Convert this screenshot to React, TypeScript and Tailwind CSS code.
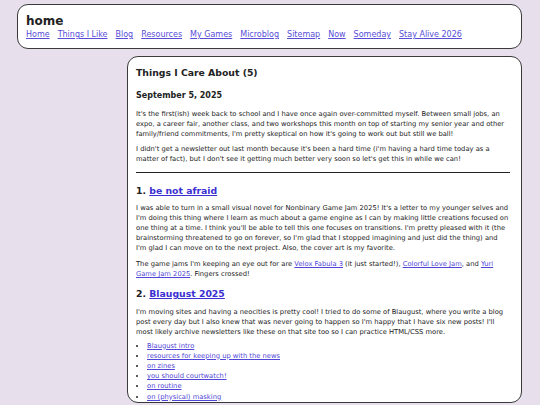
import React from 'react'

const nav = ['Home', 'Things I Like', 'Blog', 'Resources', 'My Games', 'Microblog', 'Sitemap', 'Now', 'Someday', 'Stay Alive 2026']

const posts = [
  'Blaugust intro',
  'resources for keeping up with the news',
  'on zines',
  'you should courtwatch!',
  'on routine',
  'on (physical) masking',
]

function A({ children }: { children: React.ReactNode }) {
  return (
    <a href="#" className="text-[#4f46d8] underline">
      {children}
    </a>
  )
}

export default function App() {
  return (
    <div
      className="h-[405px] overflow-hidden bg-[#e7e0ec] pt-[4px] text-[#222]"
      style={{ fontFamily: '"DejaVu Sans", Verdana, sans-serif' }}
    >
      {/* header */}
      <header className="ml-[17px] mr-[18px] rounded-[11px] border-[1.5px] border-[#3a3a3a] bg-white px-[8px] pb-[7px] pt-[8px]">
        <h1 className="text-[12px] font-bold leading-[16px]">home</h1>
        <nav className="flex gap-[8px] text-[8px] leading-[12px]">
          {nav.map((n) => (
            <a key={n} href="#" className="text-[#574ed8] underline">
              {n}
            </a>
          ))}
        </nav>
      </header>

      <div className="mt-[7px] flex">
        <div className="w-[127px] shrink-0" />
        <main className="mr-[18px] flex-1 rounded-[11px] border-[1.5px] border-[#3a3a3a] bg-white pl-[8px] pr-[11px] pt-[8px]">
          <h2 className="text-[9.3px] font-bold leading-[16px]">Things I Care About (5)</h2>
          <h3 className="mt-[8px] text-[8px] font-bold leading-[14px]">September 5, 2025</h3>
          <div className="text-[6.75px] leading-[10px]">
            <p className="mt-[5.5px]">
              It's the first(ish) week back to school and I have once again over-committed myself. Between small jobs, an
              expo, a career fair, another class, and two workshops this month on top of starting my senior year and other
              family/friend commitments, I'm pretty skeptical on how it's going to work out but still we ball!
            </p>
            <p className="mt-[5px]">
              I didn't get a newsletter out last month because it's been a hard time (i'm having a hard time today as a
              matter of fact), but I don't see it getting much better very soon so let's get this in while we can!
            </p>
          </div>
          <hr className="mt-[8px] border-t-[1.5px] border-[#222]" />

          <h2 className="mt-[10.5px] text-[9.3px] font-bold leading-[16px]">
            1.{' '}
            <a href="#" className="text-[#3b30d2] underline">
              be not afraid
            </a>
          </h2>
          <div className="text-[6.75px] leading-[10px]">
            <p className="mt-[4px]">
              I was able to turn in a small visual novel for Nonbinary Game Jam 2025! It's a letter to my younger selves and
              I'm doing this thing where I learn as much about a game engine as I can by making little creations focused on
              one thing at a time. I think you'll be able to tell this one focuses on transitions. I'm pretty pleased with it
              (the brainstorming threatened to go on forever, so I'm glad that I stopped imagining and just did the thing) and
              I'm glad I can move on to the next project. Also, the cover art is my favorite.
            </p>
            <p className="mt-[6px]">
              The game jams I'm keeping an eye out for are <A>Velox Fabula 3</A> (it just started!), <A>Colorful Love Jam</A>,
              and <A>Yuri Game Jam 2025</A>. Fingers crossed!
            </p>
          </div>

          <h2 className="mt-[7px] text-[9.3px] font-bold leading-[16px]">
            2.{' '}
            <a href="#" className="text-[#3b30d2] underline">
              Blaugust 2025
            </a>
          </h2>
          <div className="text-[6.75px] leading-[10px]">
            <p className="mt-[5px]">
              I'm moving sites and having a neocities is pretty cool! I tried to do some of Blaugust, where you write a blog
              post every day but I also knew that was never going to happen so I'm happy that I have six new posts! I'll
              most likely archive newsletters like these on that site too so I can practice HTML/CSS more.
            </p>
            <ul className="mt-[3.5px] list-disc pl-[11px] leading-[10.2px]">
              {posts.map((p) => (
                <li key={p}>
                  <A>{p}</A>
                </li>
              ))}
            </ul>
          </div>
        </main>
      </div>
    </div>
  )
}
